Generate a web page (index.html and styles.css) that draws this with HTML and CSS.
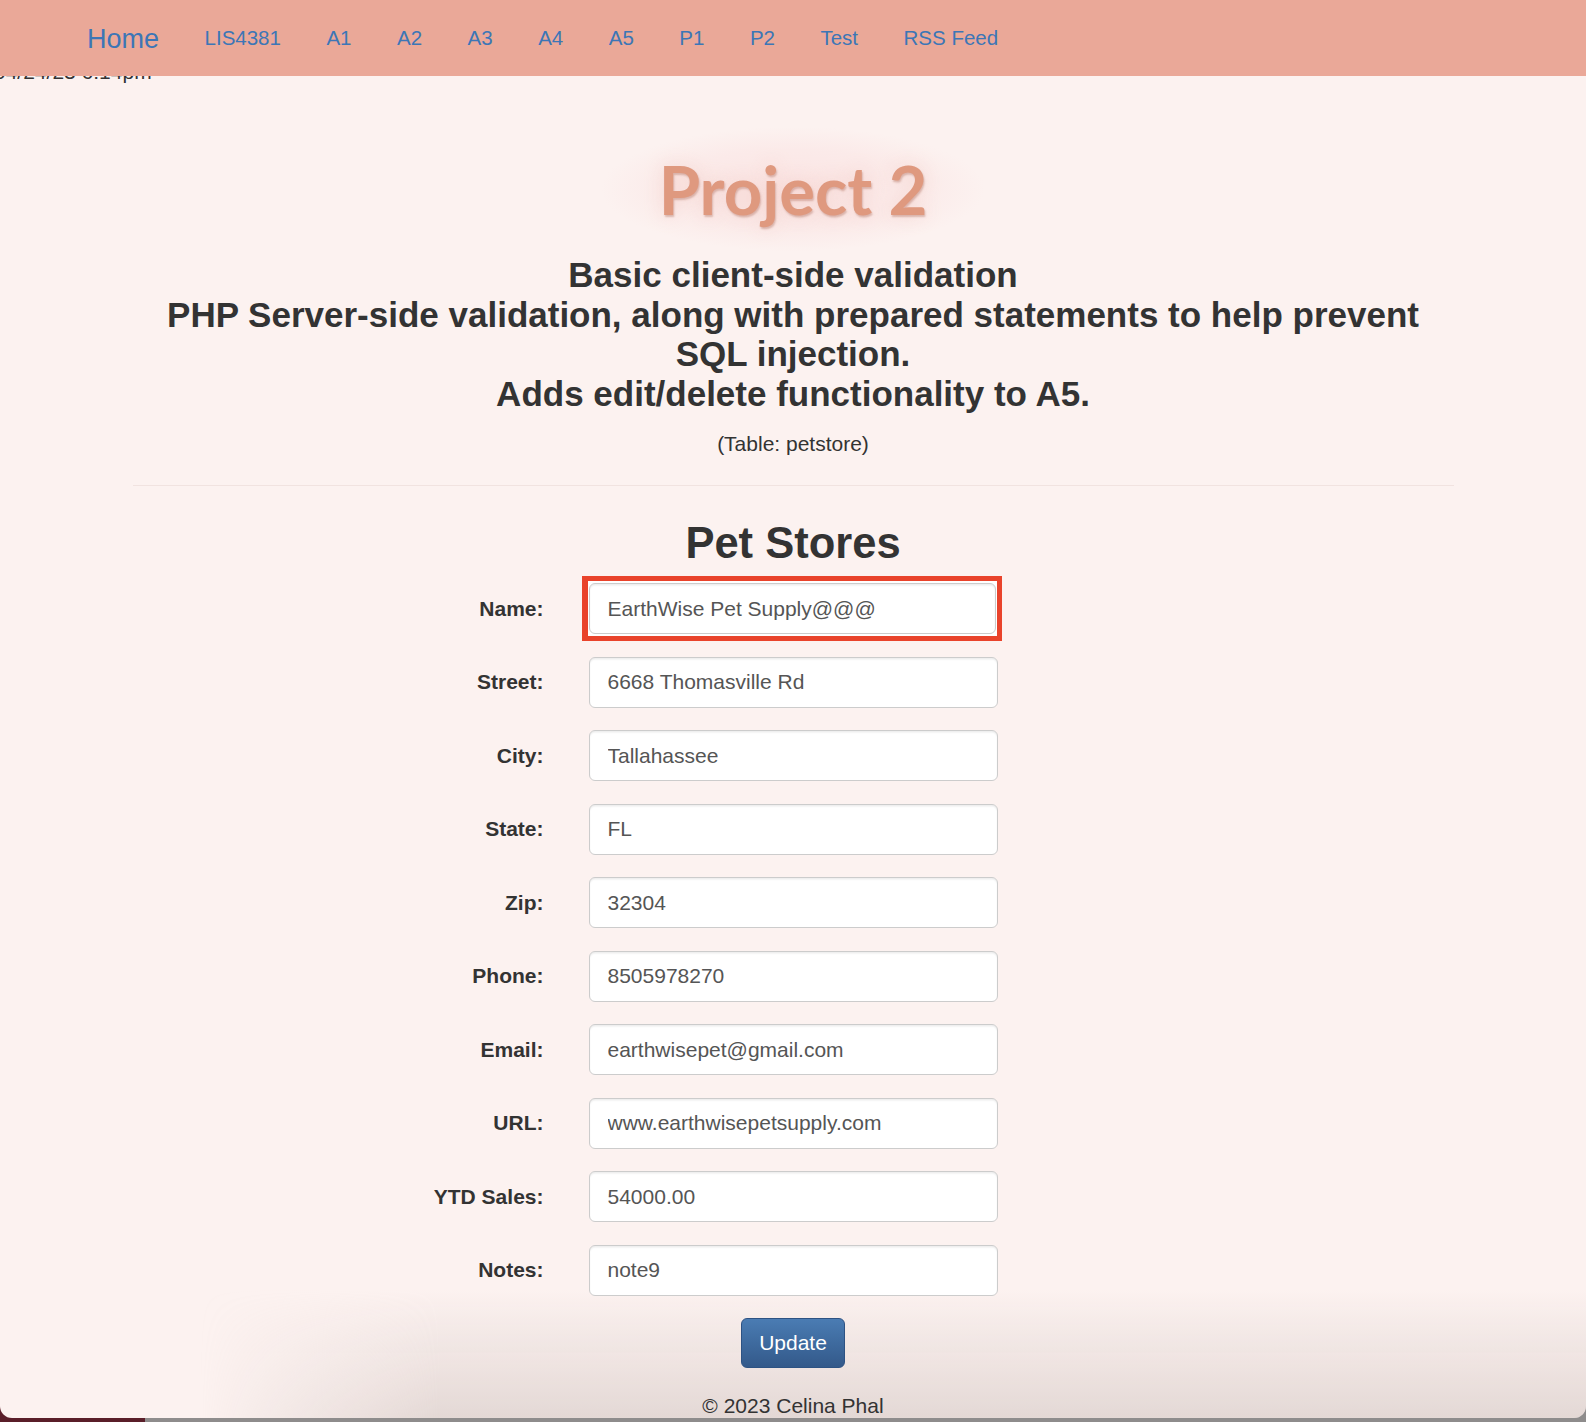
FILE: index.html
```html
<!DOCTYPE html>
<html lang="en">
<head>
<meta charset="utf-8">
<title>Project 2 - Pet Stores</title>
<link rel="stylesheet" href="styles.css">
</head>
<body>
<div class="page">
  <nav class="navbar">
    <a class="brand" href="#">Home</a>
    <a class="nav-link" href="#">LIS4381</a>
    <a class="nav-link" href="#">A1</a>
    <a class="nav-link" href="#">A2</a>
    <a class="nav-link" href="#">A3</a>
    <a class="nav-link" href="#">A4</a>
    <a class="nav-link" href="#">A5</a>
    <a class="nav-link" href="#">P1</a>
    <a class="nav-link" href="#">P2</a>
    <a class="nav-link" href="#">Test</a>
    <a class="nav-link" href="#">RSS Feed</a>
  </nav>

  <p class="stamp">04/24/23 6:14pm</p>

  <main class="container">
    <header class="page-header">
      <h1 class="title"><span class="title-glow">Project 2</span></h1>
      <h3 class="lead">Basic client-side validation<br>PHP Server-side validation, along with prepared statements to help prevent SQL injection.<br>Adds edit/delete functionality to A5.</h3>
      <p class="table-note">(Table: petstore)</p>
    </header>

    <hr class="divider">

    <h2 class="section-title">Pet Stores</h2>

    <form class="store-form">
      <div class="form-row">
        <label class="form-label">Name:</label>
        <span class="flag"><input class="form-input" type="text" value="EarthWise Pet Supply@@@"></span>
      </div>
      <div class="form-row">
        <label class="form-label">Street:</label>
        <input class="form-input" type="text" value="6668 Thomasville Rd">
      </div>
      <div class="form-row">
        <label class="form-label">City:</label>
        <input class="form-input" type="text" value="Tallahassee">
      </div>
      <div class="form-row">
        <label class="form-label">State:</label>
        <input class="form-input" type="text" value="FL">
      </div>
      <div class="form-row">
        <label class="form-label">Zip:</label>
        <input class="form-input" type="text" value="32304">
      </div>
      <div class="form-row">
        <label class="form-label">Phone:</label>
        <input class="form-input" type="text" value="8505978270">
      </div>
      <div class="form-row">
        <label class="form-label">Email:</label>
        <input class="form-input" type="text" value="earthwisepet@gmail.com">
      </div>
      <div class="form-row">
        <label class="form-label">URL:</label>
        <input class="form-input" type="text" value="www.earthwisepetsupply.com">
      </div>
      <div class="form-row">
        <label class="form-label">YTD Sales:</label>
        <input class="form-input" type="text" value="54000.00">
      </div>
      <div class="form-row">
        <label class="form-label">Notes:</label>
        <input class="form-input" type="text" value="note9">
      </div>
      <div class="form-actions">
        <button class="btn-primary" type="button">Update</button>
      </div>
    </form>

    <footer class="footer">© 2023 Celina Phal</footer>
  </main>
</div>
</body>
</html>
```

FILE: styles.css
```css
* { box-sizing: border-box; }

html {
  margin: 0;
  height: 1422px;
  background: linear-gradient(to right, #5a1e29 0, #5a1e29 145px, #8e8c8c 145px);
  overflow: hidden;
}

body {
  margin: 0;
  font-family: "Liberation Sans", Arial, Helvetica, sans-serif;
  font-size: 21px;
  line-height: 30px;
  color: #333;
}

.page {
  position: relative;
  height: 1418px;
  background: #fcf2f0;
  border-radius: 0 0 12px 12px;
  overflow: hidden;
}

.page::after {
  content: "";
  position: absolute;
  left: 200px;
  right: 0;
  bottom: 0;
  height: 130px;
  z-index: 0;
  background: linear-gradient(to bottom, rgba(205, 192, 188, 0), rgba(205, 192, 188, 0.5));
  -webkit-mask-image: linear-gradient(to right, transparent 0, #000 240px);
  mask-image: linear-gradient(to right, transparent 0, #000 240px);
  pointer-events: none;
}

/* navbar overlays the top of the page */
.navbar {
  position: absolute;
  top: 0;
  left: 0;
  right: 0;
  z-index: 5;
  height: 76px;
  background: #eaa898;
  display: flex;
  align-items: center;
  padding-left: 87px;
  gap: 45.5px;
}

.navbar a {
  color: #3c76b6;
  text-decoration: none;
  font-size: 20.5px;
  line-height: 30px;
}

.navbar .brand {
  font-size: 27px;
  margin-top: 1px;
}

.stamp {
  margin: 0 0 0 -6px;
  padding-top: 57px;
  font-size: 21px;
  line-height: 30px;
  color: #333;
}

.container {
  position: relative;
  z-index: 1;
  width: 1321px;
  margin: 0 auto;
}

.page-header {
  text-align: center;
}

.title {
  margin: 57px 0 0;
  font-family: "Lato", "Open Sans", sans-serif;
  font-weight: 700;
  font-size: 67px;
  line-height: 90px;
  color: #df997f;
}

.title-glow {
  display: inline-block;
  padding: 18px 60px;
  margin: -18px 0;
  background: radial-gradient(ellipse at center, rgba(250, 222, 222, 0.7) 0, rgba(250, 225, 225, 0.45) 45%, rgba(252, 242, 240, 0) 70%);
  text-shadow: 1px 2px 2px rgba(160, 90, 70, 0.35), 0 0 18px rgba(240, 190, 180, 0.45);
}

.lead {
  margin: 21px 0 0;
  padding: 0 15px;
  font-size: 35px;
  font-weight: 700;
  line-height: 39.5px;
  color: #333;
}

.table-note {
  margin: 16px 0 0;
  font-size: 21px;
  line-height: 30px;
}

.divider {
  margin: 26px 0 0;
  border: 0;
  border-top: 1.5px solid #f1e3e0;
}

.section-title {
  margin: 32px 0 0;
  text-align: center;
  font-size: 43.5px;
  font-weight: 700;
  line-height: 50px;
  color: #333;
}

.store-form {
  margin-top: 15px;
}

.form-row {
  display: grid;
  grid-template-columns: 1fr 409px 1fr;
  align-items: center;
  margin-bottom: 22.5px;
}

.form-label {
  text-align: right;
  padding-right: 45px;
  font-weight: 700;
  font-size: 21px;
}

.form-input {
  display: block;
  width: 409px;
  height: 51px;
  padding: 0 18px;
  font-family: "Liberation Sans", Arial, Helvetica, sans-serif;
  font-size: 21px;
  color: #555;
  background: #fff;
  border: 1.5px solid #ccc;
  border-radius: 6px;
  box-shadow: inset 0 1.5px 1.5px rgba(0, 0, 0, 0.075);
}

/* red annotation box drawn around the Name field */
.flag {
  display: block;
  margin: -7px -4px -7px -7px;
  padding: 2px 0 2px 1px;
  border: 5px solid #e9432b;
  border-left-width: 6px;
  background: #fff;
}

.flag .form-input {
  width: 407px;
}

.form-actions {
  display: flex;
  justify-content: center;
}

.btn-primary {
  height: 50px;
  padding: 0 17px;
  font-family: "Liberation Sans", Arial, Helvetica, sans-serif;
  font-size: 21px;
  color: #fff;
  background: linear-gradient(to bottom, #4a7cb3 0, #33598a 100%);
  border: 1.5px solid #2d5283;
  border-radius: 6px;
}

.footer {
  margin-top: 23px;
  text-align: center;
  font-size: 21px;
  line-height: 30px;
}
```
